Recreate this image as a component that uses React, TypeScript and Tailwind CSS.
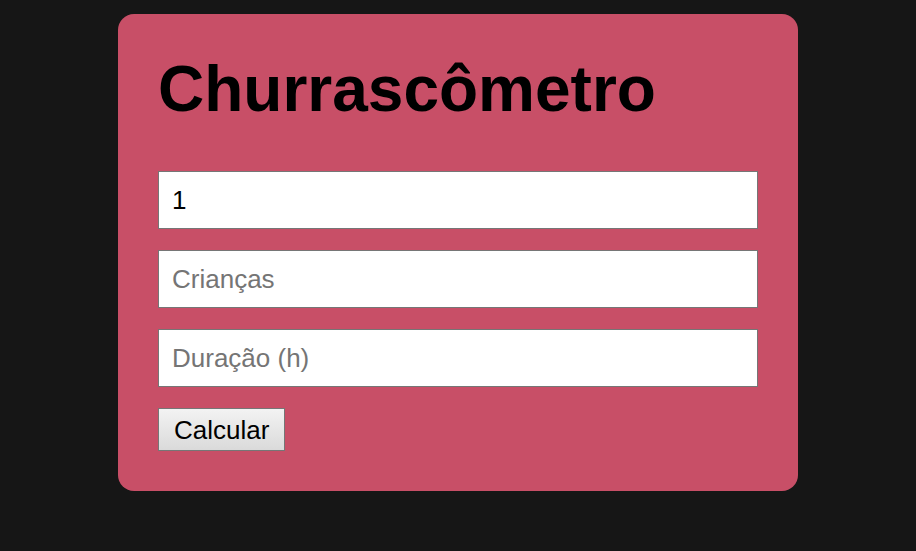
import React from 'react';

const App: React.FC = () => {
  return (
    <div className="min-h-[551px] bg-[#161616] pt-[14px] font-['Liberation_Sans',Arial,sans-serif]">
      <div className="mx-auto w-[680px] rounded-[16px] bg-[#c84f67] px-[40px] pt-[38px] pb-[40px]">
        <h1 className="mb-[45px] text-[64px] font-bold leading-[74px] text-black">
          Churrascômetro
        </h1>

        <div className="flex flex-col gap-[21px]">
          <input
            type="number"
            defaultValue="1"
            className="h-[58px] w-full border border-[#767676] bg-white px-[13px] text-[26px] text-black outline-none"
          />
          <input
            type="number"
            placeholder="Crianças"
            className="h-[58px] w-full border border-[#767676] bg-white px-[13px] text-[26px] text-black outline-none placeholder:text-[#757575]"
          />
          <input
            type="number"
            placeholder="Duração (h)"
            className="h-[58px] w-full border border-[#767676] bg-white px-[13px] text-[26px] text-black outline-none placeholder:text-[#757575]"
          />
          <div>
            <button className="h-[43px] border border-[#767676] bg-gradient-to-b from-[#f3f3f3] to-[#dadada] px-[15px] text-[26px] leading-[30px] text-black">
              Calcular
            </button>
          </div>
        </div>
      </div>
    </div>
  );
};

export default App;
